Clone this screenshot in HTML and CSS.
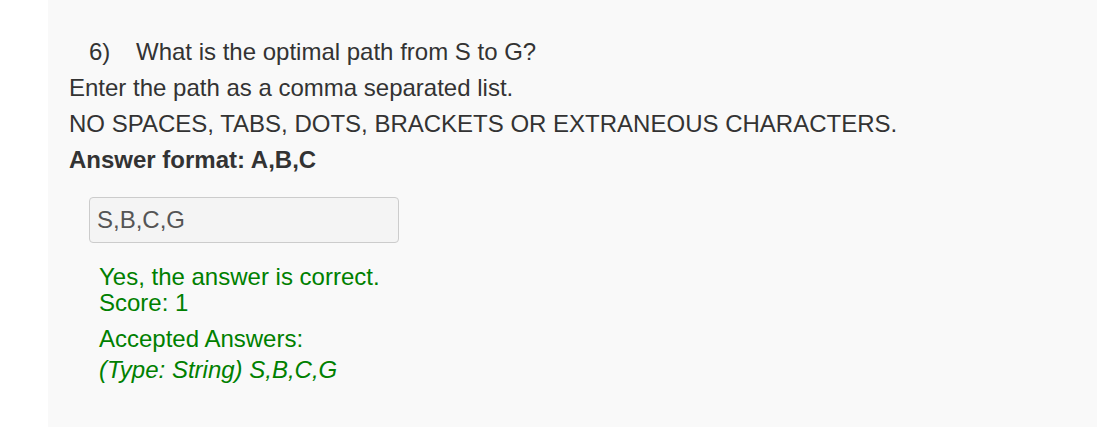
FILE: index.html
```html
<!DOCTYPE html>
<html>
<head>
<meta charset="utf-8">
<link rel="stylesheet" href="styles.css">
</head>
<body>
<div class="page">
  <div class="gutter"></div>
  <div class="panel">
    <div class="question">
      <div class="qtitle"><span class="qnum">6)</span><span class="qtext">What is the optimal path from S to G?</span></div>
      <p class="line">Enter the path as a comma separated list.</p>
      <p class="line">NO SPACES, TABS, DOTS, BRACKETS OR EXTRANEOUS CHARACTERS.</p>
      <p class="line bold">Answer format: A,B,C</p>
      <div class="answer">
        <div class="input">S,B,C,G</div>
        <div class="feedback">
          <div class="fb-line">Yes, the answer is correct.</div>
          <div class="fb-line">Score: 1</div>
          <div class="accepted">
            <div class="fb-line">Accepted Answers:</div>
            <div class="fb-line italic">(Type: String) S,B,C,G</div>
          </div>
        </div>
      </div>
    </div>
  </div>
</div>
</body>
</html>
```
FILE: styles.css
```css
html, body {
  margin: 0;
  padding: 0;
  background: #ffffff;
}
body {
  font-family: "Liberation Sans", Arial, sans-serif;
  font-size: 24px;
  color: #333333;
}
.page {
  display: flex;
  height: 427px;
}
.gutter {
  width: 48px;
  flex: none;
  background: #ffffff;
}
.panel {
  flex: 1;
  background: #f9f9f9;
}
.question {
  padding: 38px 0 0 21px;
}
.qtitle {
  display: flex;
  padding-left: 20px;
  line-height: 28px;
  margin-bottom: 8px;
}
.qnum {
  width: 47px;
  flex: none;
}
.line {
  margin: 0 0 8px 0;
  line-height: 28px;
}
.bold {
  font-weight: bold;
}
.answer {
  padding: 15px 0 0 20px;
}
.input {
  width: 294px;
  height: 44px;
  box-sizing: content-box;
  border: 1px solid #cccccc;
  border-radius: 4px;
  background: #f4f4f4;
  color: #555555;
  padding: 0 7px;
  line-height: 44px;
}
.feedback {
  color: #008000;
  padding: 21px 0 0 10px;
}
.fb-line {
  line-height: 26px;
}
.accepted {
  margin-top: 10px;
}
.italic {
  font-style: italic;
  margin-top: 5px;
}
```
